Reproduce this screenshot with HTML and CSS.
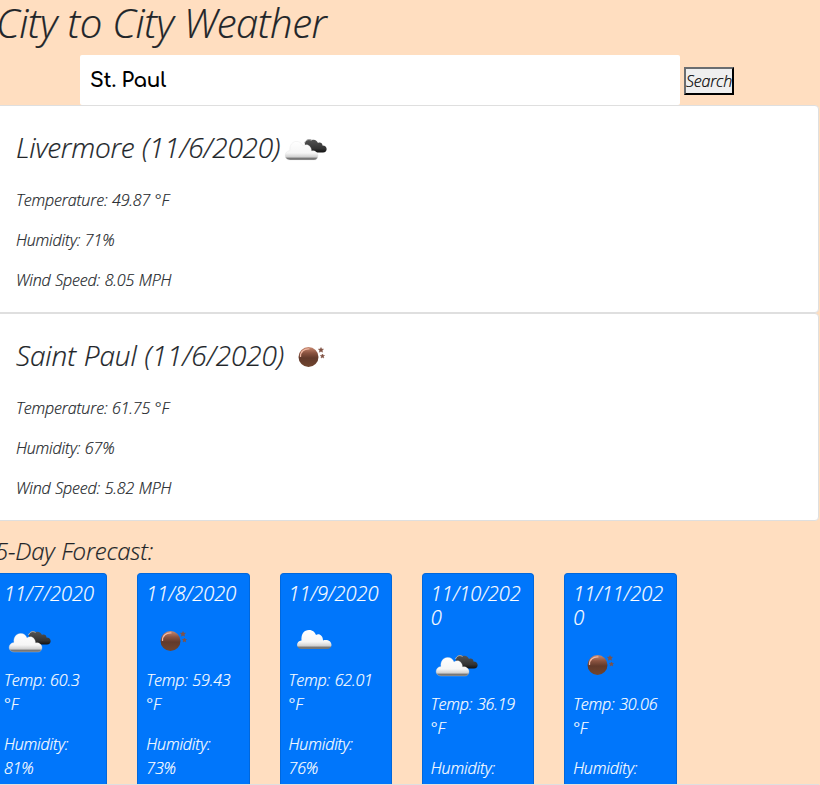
FILE: index.html
```
<!DOCTYPE html>
<html lang="en">
<head>
<meta charset="utf-8">
<title>City to City Weather</title>
<link rel="stylesheet" href="styles.css">
</head>
<body>
<svg class="defs" width="0" height="0" aria-hidden="true">
  <defs>
    <linearGradient id="white" x1="0" y1="0" x2="0" y2="1"><stop offset="0" stop-color="#fff"/><stop offset=".62" stop-color="#f6f6f6"/><stop offset=".84" stop-color="#cfcfcf"/><stop offset=".9" stop-color="#777"/><stop offset="1" stop-color="#777"/></linearGradient>
    <linearGradient id="dark" x1="0" y1="0" x2="0" y2="1"><stop offset="0" stop-color="#555"/><stop offset=".7" stop-color="#333"/><stop offset="1" stop-color="#111"/></linearGradient>
    <linearGradient id="brown" x1="0" y1="0" x2="0" y2="1"><stop offset="0" stop-color="#c98a72"/><stop offset=".3" stop-color="#8a5340"/><stop offset=".55" stop-color="#623a2b"/><stop offset="1" stop-color="#70452f"/></linearGradient>
    <symbol id="broken" viewBox="0 0 50 50">
      <path d="M25 22C24 18 28 15 32 17C35 16 37 18 38 20C40 19 42.500 20 42.500 22.500C48 22.500 48 29.500 43 29.500H28Z" fill="url(#dark)"/>
      <path d="M24.500 20C26 16.500 29 15.800 31.500 17.500" fill="none" stroke="#b8b8b8"/>
      <path d="M10 37C3.500 37 3.500 28 10 27.500C9 22 13 18 17 18.500C20 18.500 22 20.500 23 23C27 20 31.500 23 31.500 28C34 27 38 29 38 32.500C38 35 36.500 37 34 37Z" fill="url(#white)" stroke="#ddd" stroke-width=".3"/>
    </symbol>
    <symbol id="cloud" viewBox="0 0 50 50">
      <path d="M13 34C6.500 34 6.500 26 12.500 25.500C12 19 15 15 20 15C24 15 26 17.500 27 20C30 18 34 20.500 34 25.500C38 24 42.500 26 42.500 30C42.500 32 41 34 38 34Z" fill="url(#white)"/>
    </symbol>
    <symbol id="moon" viewBox="0 0 50 50">
      <circle cx="24.500" cy="26" r="10" fill="url(#brown)"/>
      <path d="M16.500 26C16 20.500 20.500 17.500 25.500 18" fill="none" stroke="#f0b8a3" stroke-width="1.200"/>
      <path d="M37 16.500l.7 1.500 1.800.2-1.300 1.200.3 1.800-1.500-.9-1.600.9.3-1.800-1.300-1.200 1.900-.2zM38.500 23l.6 1.300 1.400.2-1 1 .2 1.500-1.300-.8-1.300.8.3-1.500-1.100-1 1.500-.2z" fill="#815244" stroke="#815244" stroke-width=".5"/>
    </symbol>
  </defs>
</svg>
<main class="page">
  <h1>City to City Weather</h1>
  <form class="search">
    <input class="search-input" type="text" value="St. Paul" aria-label="City">
    <button class="search-button" type="button">Search</button>
  </form>
  <section class="city">
    <h3 class="tight">Livermore (11/6/2020)<svg class="icon"><use href="#broken"/></svg></h3>
    <p>Temperature: 49.87 °F</p>
    <p>Humidity: 71%</p>
    <p>Wind Speed: 8.05 MPH</p>
  </section>
  <section class="city">
    <h3>Saint Paul (11/6/2020)<svg class="icon"><use href="#moon"/></svg></h3>
    <p>Temperature: 61.75 °F</p>
    <p>Humidity: 67%</p>
    <p>Wind Speed: 5.82 MPH</p>
  </section>
  <h4>5-Day Forecast:</h4>
  <div class="forecast">
    <article class="day"><h5>11/7/2020</h5><svg class="icon"><use href="#broken"/></svg><p>Temp: 60.3 °F</p><p>Humidity: 81%</p></article>
    <article class="day"><h5>11/8/2020</h5><svg class="icon"><use href="#moon"/></svg><p>Temp: 59.43 °F</p><p>Humidity: 73%</p></article>
    <article class="day"><h5>11/9/2020</h5><svg class="icon"><use href="#cloud"/></svg><p>Temp: 62.01 °F</p><p>Humidity: 76%</p></article>
    <article class="day"><h5>11/10/2020</h5><svg class="icon"><use href="#broken"/></svg><p>Temp: 36.19 °F</p><p>Humidity:</p></article>
    <article class="day"><h5>11/11/2020</h5><svg class="icon"><use href="#moon"/></svg><p>Temp: 30.06 °F</p><p>Humidity:</p></article>
  </div>
</main>
</body>
</html>
```
FILE: styles.css
```
* { box-sizing: border-box; }
body {
  margin: 0;
  background: #ffdec0;
  color: #212529;
  font: italic 300 16px/24px "Open Sans", sans-serif;
  letter-spacing: -.15px;
  word-spacing: .6px;
  -webkit-text-stroke: .2px currentColor;
  overflow: hidden;
}
.defs { display: block; }
.page {
  height: 785px;
  margin: 0 1px 0 -5px;
  display: flex;
  flex-direction: column;
  overflow: hidden;
}
h1, h3, h4, h5, p { margin: 0; font-weight: 300; }
h1 { font-size: 40px; line-height: 48px; height: 56px; margin-top: -1px; padding-left: 1px; letter-spacing: -.45px; flex: none; }
.search { display: flex; align-items: center; gap: 4px; height: 50px; flex: none; padding: 0 0 0 85px; }
.search-input {
  width: 600px;
  height: 50px;
  padding: 1px 10px 0;
  border: 0;
  border-radius: 2px;
  background: #fff;
  color: #000;
  font: 700 20px Comfortaa, Lato, sans-serif;
  letter-spacing: -.2px;
  -webkit-text-stroke: 0;
}
.search-button {
  width: 50px;
  height: 28px;
  margin-top: 2px;
  padding: 0;
  border: 2px outset #212529;
  border-color: #6b6d70 #212529 #212529 #6b6d70;
  background: #efefef;
  color: #000;
  font: inherit;
  letter-spacing: -.2px;
}
.city {
  height: 208px;
  flex: none;
  padding: 16px 20px 0;
  background: #fff;
  border: 1px solid #dfdfdf;
  border-radius: 4px;
}
.city h3 { display: flex; align-items: center; height: 50px; font-size: 28px; margin-bottom: 16px; letter-spacing: -.1px; }
.city .tight { letter-spacing: -.25px; }
.city p { margin-bottom: 16px; }
.icon { display: block; width: 50px; height: 50px; flex: none; }
.city .icon { position: relative; top: 1px; }
h4 { font-size: 24px; line-height: 29px; margin: 15px 0 8px; letter-spacing: -.2px; flex: none; }
.forecast {
  display: flex;
  gap: 29.7px;
  flex: 1;
  min-height: 0;
  border-bottom: 1px solid #dfdfdf;
  margin-right: -1px;
}
.day {
  width: 112.6px;
  flex: none;
  padding: 8px 8px 0;
  overflow: hidden;
  background: #0076fb;
  border: 1px solid #0067dc;
  border-bottom: 0;
  border-radius: 4px 4px 0 0;
  color: #fff;
}
.day:first-child { width: 112px; margin-right: .6px; }
.day h5 { font-size: 20px; line-height: 24px; margin-bottom: 9px; letter-spacing: 0; overflow-wrap: anywhere; }
.day .icon { margin-bottom: 3px; }
.day p { margin-bottom: 16px; padding-right: 6px; }
```
